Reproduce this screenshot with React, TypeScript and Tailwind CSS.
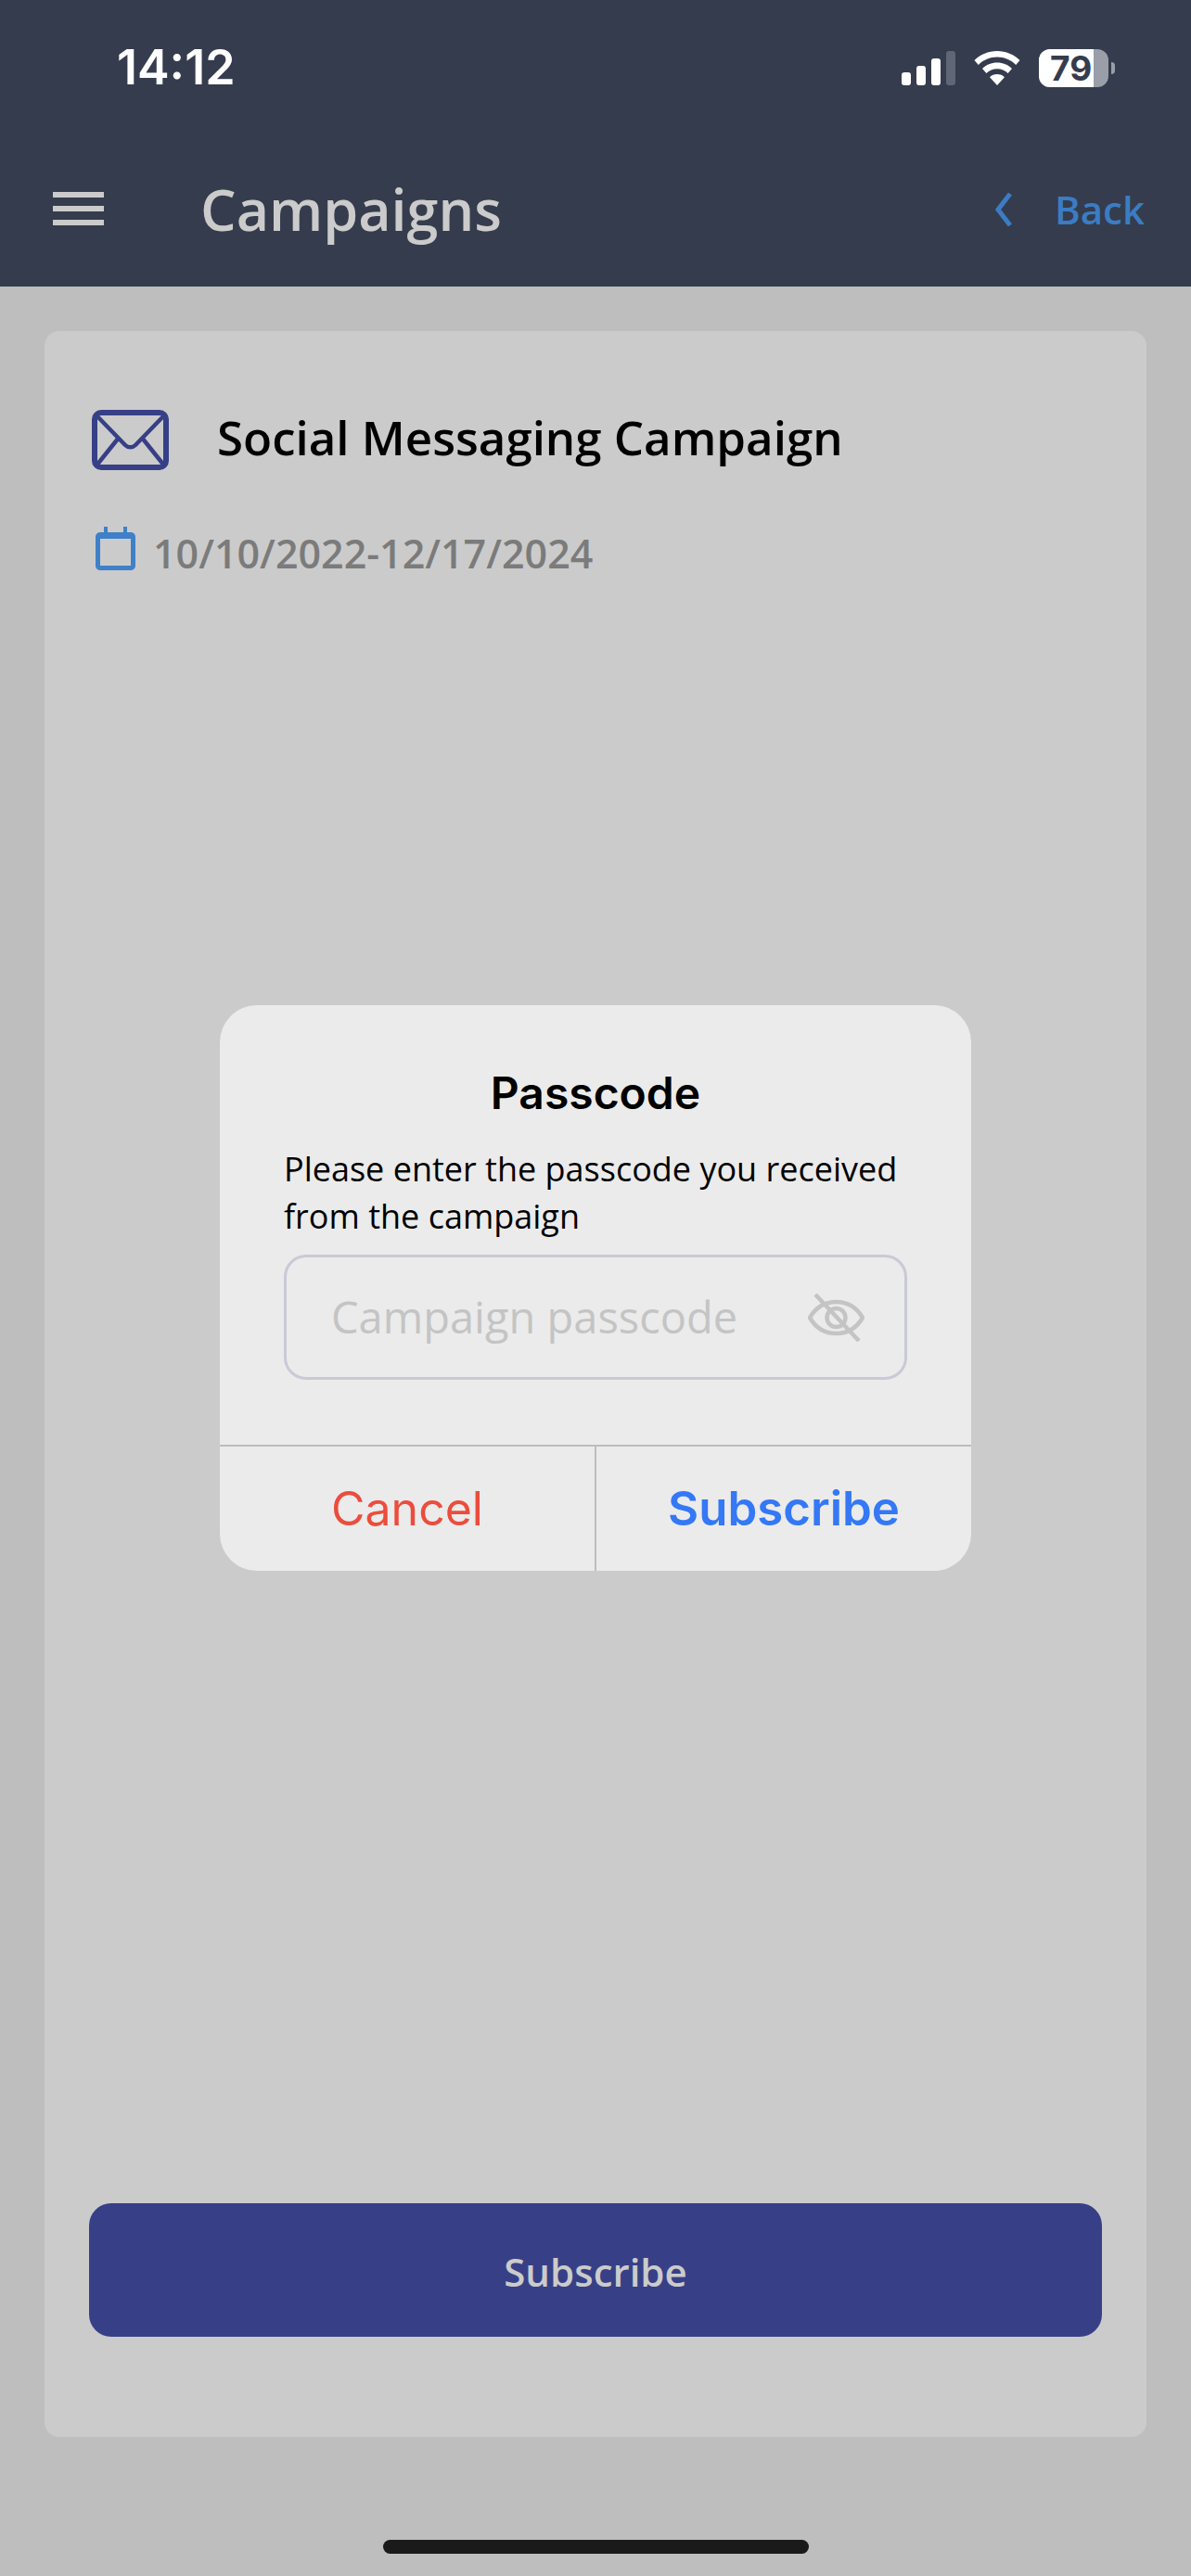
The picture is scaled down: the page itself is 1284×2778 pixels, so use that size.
import React from 'react'

const openSans = "font-['Open_Sans',sans-serif]"
const inter = "font-['Inter',sans-serif]"

function SignalIcon() {
  return (
    <svg width="58" height="37" viewBox="0 0 58 37" className="block">
      <rect x="0" y="23" width="10" height="14" rx="3" fill="#fff" />
      <rect x="16" y="16" width="10" height="21" rx="3" fill="#fff" />
      <rect x="32" y="8" width="10" height="29" rx="3" fill="#fff" />
      <rect x="48" y="0" width="10" height="37" rx="3" fill="#5f6675" />
    </svg>
  )
}

function WifiIcon() {
  return (
    <svg width="50" height="37" viewBox="0 0 50 37" className="block">
      <path d="M25 0C15.5 0 7 3.700 0.500 10l4.300 5C10.200 9.700 17.200 6.600 25 6.600S39.800 9.700 45.200 15l4.300-5C43 3.700 34.500 0 25 0z" fill="#fff" />
      <path d="M25 12.500c-6.200 0-11.800 2.400-16 6.400l4.400 5C16.400 21 20.500 19.300 25 19.300s8.600 1.700 11.600 4.600l4.400-5c-4.200-4-9.800-6.400-16-6.400z" fill="#fff" />
      <path d="M25 25c-3.100 0-5.900 1.200-8 3.200L25 37l8-8.800C30.900 26.200 28.100 25 25 25z" fill="#fff" />
    </svg>
  )
}

function BatteryIcon() {
  return (
    <div className="flex items-center gap-[3px]">
      <div className="relative flex h-[41px] w-[75px] rounded-[12px] bg-[#9a9ea8]">
        <div className="h-full w-[59px] rounded-l-[12px] bg-white" />
        <span className={`${inter} absolute left-[12px] top-0 text-[37px] leading-[41px] font-bold text-[#353c4d]`}>79</span>
      </div>
      <div className="h-[13px] w-[4px] rounded-r-full bg-[#9a9ea8]" />
    </div>
  )
}

function EnvelopeIcon() {
  return (
    <svg width="83" height="65" viewBox="0 0 83 65" fill="none" stroke="#374086" className="block">
      <rect x="3" y="3" width="77" height="59" rx="7" strokeWidth="6" />
      <path d="M5 6l31 32c3 3 8 3 11 0L78 6" strokeWidth="4.500" />
      <path d="M5 60l24-30M78 60L54 30" strokeWidth="4.500" />
    </svg>
  )
}

function CalendarIcon() {
  return (
    <svg width="43" height="47" viewBox="0 0 43 47" fill="none" className="relative top-[-3px] block">
      <path d="M9 0h4v6h17V0h4v6h4c2.800 0 5 2.200 5 5v31c0 2.800-2.200 5-5 5H5c-2.800 0-5-2.200-5-5V11c0-2.800 2.200-5 5-5h4V0z" fill="#3f80c8" />
      <rect x="5" y="13" width="33" height="29" fill="#cbcbcb" />
    </svg>
  )
}

function EyeOffIcon() {
  return (
    <svg width="61" height="52" viewBox="0 0 61 52" fill="none" stroke="#c4c4c4" strokeWidth="4.500" className="block">
      <path d="M2 26C9 14 19 9 30.500 9S52 14 59 26C52 38 42 43 30.500 43S9 38 2 26z" />
      <circle cx="30.500" cy="26" r="10" />
      <path d="M8 1l47 50" />
    </svg>
  )
}

function PasscodeDialog() {
  return (
    <div className="absolute left-[237px] top-[1084px] flex h-[610px] w-[810px] flex-col rounded-[40px] bg-[#ebebeb]">
      <div className="flex flex-1 flex-col px-[69px] pt-[72px]">
        <h2 className={`${inter} text-center text-[48px] leading-[46px] font-semibold text-black`}>Passcode</h2>
        <p className={`${openSans} mt-[33px] text-[36px] leading-[51px] text-black`}>
          Please enter the passcode you received from the campaign
        </p>
        <div className="mt-[16px] flex h-[135px] items-center justify-between rounded-[24px] border-[3px] border-[#c9cad6] pl-[48px] pr-[43px]">
          <input
            readOnly
            placeholder="Campaign passcode"
            className={`${openSans} w-[480px] bg-transparent text-[47px] outline-none placeholder:text-[#c4c4c4]`}
          />
          <EyeOffIcon />
        </div>
      </div>
      <div className="flex h-[136px] border-t-2 border-[#bdbdbd]">
        <button className={`${inter} flex-1 text-[50px] font-normal text-[#eb4d3d]`}>Cancel</button>
        <div className="w-[2px] bg-[#bdbdbd]" />
        <button className={`${inter} flex-1 text-[51px] font-semibold text-[#3478f6]`}>Subscribe</button>
      </div>
    </div>
  )
}

export default function App() {
  return (
    <div className="relative flex h-[2778px] w-[1284px] flex-col overflow-hidden bg-[#bebebe]">
      <header className="flex h-[309px] flex-col bg-[#353c4d]">
        <div className="flex h-[94px] items-end justify-between pl-[126px] pr-[82px]">
          <span className={`${inter} relative top-[3px] text-[52px] leading-[48px] font-semibold text-white`}>14:12</span>
          <div className="flex items-center gap-[20px]">
            <SignalIcon />
            <WifiIcon />
            <BatteryIcon />
          </div>
        </div>
        <div className="mt-[102px] flex items-center pl-[57px] pr-[50px]">
          <div className="relative top-[-1px] flex w-[55px] flex-col gap-[9px]">
            <div className="h-[6px] bg-[#cbcbcb]" />
            <div className="h-[6px] bg-[#cbcbcb]" />
            <div className="h-[6px] bg-[#cbcbcb]" />
          </div>
          <h1 className={`${openSans} ml-[104px] text-[61px] leading-[60px] font-semibold text-[#cbcbcb]`}>Campaigns</h1>
          <div className="ml-auto flex items-center gap-[46px]">
            <svg width="18" height="36" viewBox="0 0 18 36" fill="none" stroke="#3b7cc4" strokeWidth="5" className="block">
              <path d="M16 1L3 18l13 17" />
            </svg>
            <span className={`${openSans} text-[42px] leading-[50px] font-semibold text-[#3b7cc4]`}>Back</span>
          </div>
        </div>
      </header>

      <main className="mx-[48px] mt-[48px] flex h-[2271px] flex-col rounded-[16px] bg-[#cbcbcb] pl-[51px] pr-[48px] pt-[85px]">
        <div className="flex items-center">
          <EnvelopeIcon />
          <span className={`${openSans} relative top-[-4px] ml-[52px] text-[51px] leading-[64px] font-semibold text-black`}>Social Messaging Campaign</span>
        </div>
        <div className="mt-[62px] flex items-center pl-[4px]">
          <CalendarIcon />
          <span className={`${openSans} relative top-[3px] ml-[19px] text-[43px] leading-[50px] font-semibold text-[#7b7b7b]`}>10/10/2022-12/17/2024</span>
        </div>
        <button className={`${openSans} -ml-[3px] mt-auto mb-[108px] h-[144px] rounded-[24px] bg-[#374086] pt-[2px] text-[42px] font-semibold text-[#cbcbcb]`}>
          Subscribe
        </button>
      </main>

      <div className="mt-[111px] h-[15px] w-[459px] self-center rounded-full bg-[#1a1a1a]" />

      <PasscodeDialog />
    </div>
  )
}
